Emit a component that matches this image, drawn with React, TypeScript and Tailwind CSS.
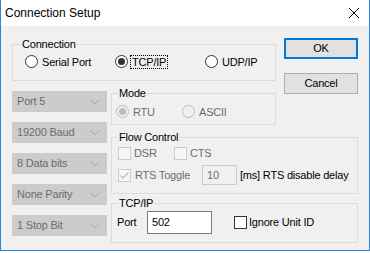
import React from "react";

function Radio({
  label,
  checked = false,
  disabled = false,
  focus = false,
  width,
}: {
  label: string;
  checked?: boolean;
  disabled?: boolean;
  focus?: boolean;
  width: string;
}) {
  return (
    <div className={`flex items-center h-[13px] ${width}`}>
      <span
        className={`flex items-center justify-center w-[13px] h-[13px] shrink-0 rounded-full border ${
          disabled ? "border-[#bcbcbc] bg-[#f0f0f0]" : "border-[#333333] bg-white"
        }`}
      >
        {checked && (
          <span className={`w-[7px] h-[7px] rounded-full ${disabled ? "bg-[#bcbcbc]" : "bg-[#333333]"}`} />
        )}
      </span>
      <span
        className={`ml-[2px] px-[1px] leading-[12px] border border-dotted ${
          focus ? "border-black" : "border-transparent"
        } ${disabled ? "text-[#6d6d6d]" : "text-black"}`}
      >
        {label}
      </span>
    </div>
  );
}

function Check({
  label,
  checked = false,
  disabled = false,
  width,
  gap,
}: {
  label: string;
  checked?: boolean;
  disabled?: boolean;
  width: string;
  gap: string;
}) {
  return (
    <div className={`flex items-center ${width} ${gap}`}>
      <span
        className={`flex items-center justify-center w-[13px] h-[13px] shrink-0 border ${
          disabled ? "border-[#cccccc] bg-[#f7f7f7]" : "border-[#333333] bg-white"
        }`}
      >
        {checked && (
          <svg width="11" height="11" viewBox="0 0 11 11">
            <path d="M1.5 5.5 L4 8 L9.5 2.5" stroke={disabled ? "#bcbcbc" : "#333333"} strokeWidth="1.3" fill="none" />
          </svg>
        )}
      </span>
      <span className={`leading-[13px] ${disabled ? "text-[#6d6d6d]" : "text-black"}`}>{label}</span>
    </div>
  );
}

function Combo({ label }: { label: string }) {
  return (
    <div className="flex items-center justify-between h-[21px] bg-[#cccccc] border border-[#cccccc] pl-[4px] pr-[6px] text-[#6d6d6d]">
      <span className="leading-[13px]">{label}</span>
      <svg width="10" height="6" viewBox="0 0 10 6">
        <path d="M0.5 0.5 L5 5 L9.5 0.5" stroke="#a6a6a6" strokeWidth="1" fill="none" />
      </svg>
    </div>
  );
}

function GroupLabel({ text, left }: { text: string; left: string }) {
  return (
    <span className={`absolute -top-[7px] ${left} px-[1px] bg-[#f0f0f0] leading-[13px] text-black`}>{text}</span>
  );
}

export default function App() {
  return (
    <div className="w-[370px] h-[253px] bg-white font-['Liberation_Sans',Arial,sans-serif] text-[11px] tracking-[-0.2px]">
      <div className="flex flex-col w-[370px] h-[251px] border-x border-b border-[#2b84d6]">
        <div className="flex items-center justify-between h-[26px] bg-white pl-[4px] pr-[10px]">
          <span className="text-[12px] tracking-normal leading-[14px] text-black">Connection Setup</span>
          <svg width="10" height="10" viewBox="0 0 10 10">
            <path d="M0 0 L10 10 M10 0 L0 10" stroke="#000" strokeWidth="1" />
          </svg>
        </div>
        <div className="flex-1 bg-[#f0f0f0] grid grid-cols-[95px_4px_165px_8px_74px] content-start pl-[11px] pt-[12px]">
          {/* Connection */}
          <div className="relative col-start-1 col-span-3 row-start-1 mt-[6px] h-[37px] border border-[#dcdcdc]">
            <GroupLabel text="Connection" left="left-[8px]" />
            <div className="flex items-center pl-[12px] pt-[10px]">
              <Radio label="Serial Port" width="w-[90px]" />
              <Radio label="TCP/IP" checked focus width="w-[90px]" />
              <Radio label="UDP/IP" width="w-[70px]" />
            </div>
          </div>

          {/* Buttons */}
          <div className="col-start-5 row-start-1 row-span-2 self-start flex flex-col gap-[14px]">
            <button className="h-[21px] w-full bg-[#e1e1e1] border-2 border-[#0078d7] text-black leading-[13px]">
              OK
            </button>
            <button className="h-[21px] w-full bg-[#e1e1e1] border border-[#adadad] text-black leading-[13px]">
              Cancel
            </button>
          </div>

          {/* Combos */}
          <div className="col-start-1 row-start-2 row-span-3 self-start mt-[10px] flex flex-col gap-[10px]">
            <Combo label="Port 5" />
            <Combo label="19200 Baud" />
            <Combo label="8 Data bits" />
            <Combo label="None Parity" />
            <Combo label="1 Stop Bit" />
          </div>

          {/* Mode */}
          <div className="relative col-start-3 row-start-2 mt-[12px] h-[32px] border border-[#dcdcdc]">
            <GroupLabel text="Mode" left="left-[6px]" />
            <div className="flex items-center pl-[4px] pt-[11px]">
              <Radio label="RTU" checked disabled width="w-[66px]" />
              <Radio label="ASCII" disabled width="w-[60px]" />
            </div>
          </div>

          {/* Flow Control */}
          <div className="relative col-start-3 col-span-3 row-start-3 mt-[12px] h-[57px] border border-[#dcdcdc]">
            <GroupLabel text="Flow Control" left="left-[6px]" />
            <div className="flex flex-col pl-[6px] pt-[9px]">
              <div className="flex items-center h-[13px]">
                <Check label="DSR" disabled width="w-[56px]" gap="gap-[3px]" />
                <Check label="CTS" disabled width="w-[50px]" gap="gap-[3px]" />
              </div>
              <div className="flex items-center h-[20px] mt-[5px]">
                <Check label="RTS Toggle" checked disabled width="w-[84px]" gap="gap-[4px]" />
                <div className="flex items-center w-[35px] h-[20px] border border-[#cccccc] bg-[#f0f0f0] pl-[4px] text-[#6d6d6d] leading-[13px]">
                  10
                </div>
                <span className="ml-[3px] leading-[13px] text-black">[ms] RTS disable delay</span>
              </div>
            </div>
          </div>

          {/* TCP/IP */}
          <div className="relative col-start-3 col-span-3 row-start-4 mt-[9px] h-[40px] border border-[#dcdcdc]">
            <GroupLabel text="TCP/IP" left="left-[6px]" />
            <div className="flex items-center pl-[5px] pt-[7px]">
              <span className="w-[30px] leading-[13px] text-black">Port</span>
              <div className="flex items-center w-[65px] h-[23px] border border-[#7a7a7a] bg-white pl-[4px] leading-[13px] text-black">
                502
              </div>
              <div className="ml-[22px]">
                <Check label="Ignore Unit ID" width="w-[100px]" gap="gap-[2px]" />
              </div>
            </div>
          </div>
        </div>
      </div>
    </div>
  );
}
